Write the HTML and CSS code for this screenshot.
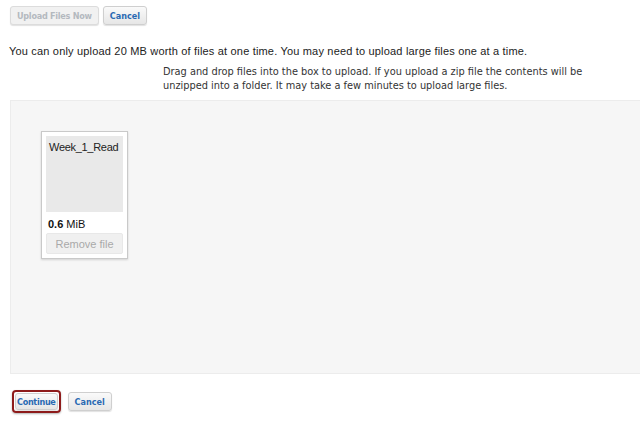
FILE: index.html
```html
<!DOCTYPE html>
<html>
<head>
<meta charset="utf-8">
<link rel="stylesheet" href="styles.css">
</head>
<body>
<div class="page">
  <div class="top-actions">
    <button class="btn btn-disabled">Upload Files Now</button>
    <button class="btn">Cancel</button>
  </div>
  <p class="note">You can only upload 20 MB worth of files at one time. You may need to upload large files one at a time.</p>
  <p class="hint">Drag and drop files into the box to upload. If you upload a zip file the contents will be<br>unzipped into a folder. It may take a few minutes to upload large files.</p>
  <div class="dropzone">
    <div class="file-card">
      <div class="thumb"><span class="fname">Week_1_Read</span></div>
      <div class="size"><b>0.6</b> MiB</div>
      <div class="remove">Remove file</div>
    </div>
  </div>
  <div class="bottom-actions">
    <span class="highlight"><button class="btn">Continue</button></span>
    <button class="btn">Cancel</button>
  </div>
</div>
</body>
</html>
```
FILE: styles.css
```css
* { box-sizing: border-box; }
html, body { margin: 0; padding: 0; background: #fff; }
body { font-family: "Liberation Sans", Arial, sans-serif; color: #222; width: 640px; height: 426px; overflow: hidden; }
.page { padding: 6px 0 0 0; }
.top-actions { display: flex; gap: 4px; padding-left: 10px; }
.btn {
  font-family: "DejaVu Sans Condensed", "DejaVu Sans", sans-serif;
  font-weight: bold;
  font-size: 9px;
  color: #2a6ab3;
  background: linear-gradient(#fafafa, #e6e6e6);
  border: 1px solid #cfcfcf;
  border-radius: 3px;
  height: 19px;
  padding: 0 6px;
  box-shadow: 0 1px 1px rgba(0,0,0,0.12);
}
.btn-disabled { color: #b4b9bf; background: #f1f1f1; border-color: #dcdcdc; letter-spacing: -0.25px; }
.note { margin: 19px 0 0 9px; font-size: 11px; line-height: 14px; color: #222; letter-spacing: 0.18px; }
.hint { margin: 7px 0 0 163px; font-family: "DejaVu Sans", sans-serif; font-size: 9.8px; line-height: 14px; color: #333; }
.dropzone {
  margin: 7px 0 0 10px;
  height: 274px;
  background: #f6f6f6;
  border: 1px solid #ececec;
  border-right: none;
  padding: 30px 0 0 30px;
}
.file-card {
  width: 87px;
  height: 128px;
  background: #fff;
  border: 1px solid #c9c9c9;
  box-shadow: 0 1px 2px rgba(0,0,0,0.15);
  padding: 4px;
}
.thumb { height: 76px; background: #e9e9e9; padding: 1px 3px; }
.fname { font-size: 11px; color: #222; letter-spacing: -0.3px; }
.size { font-size: 11px; margin-top: 5px; color: #111; line-height: 14px; padding-left: 2px; }
.remove {
  margin-top: 2px;
  height: 21px;
  background: #f0f0f0;
  border: 1px solid #e8e8e8;
  border-radius: 2px;
  color: #a9a9a9;
  font-size: 11px;
  display: flex; align-items: center; justify-content: center;
}
.bottom-actions { display: flex; align-items: center; gap: 7px; padding-left: 12px; margin-top: 16px; }
.highlight { display: inline-flex; border: 2px solid #8e1b1b; border-radius: 4px; padding: 1px; box-shadow: 0 1px 2px rgba(0,0,0,0.3); }
.highlight .btn { height: 17px; padding: 0 1px; letter-spacing: -0.3px; }
```
